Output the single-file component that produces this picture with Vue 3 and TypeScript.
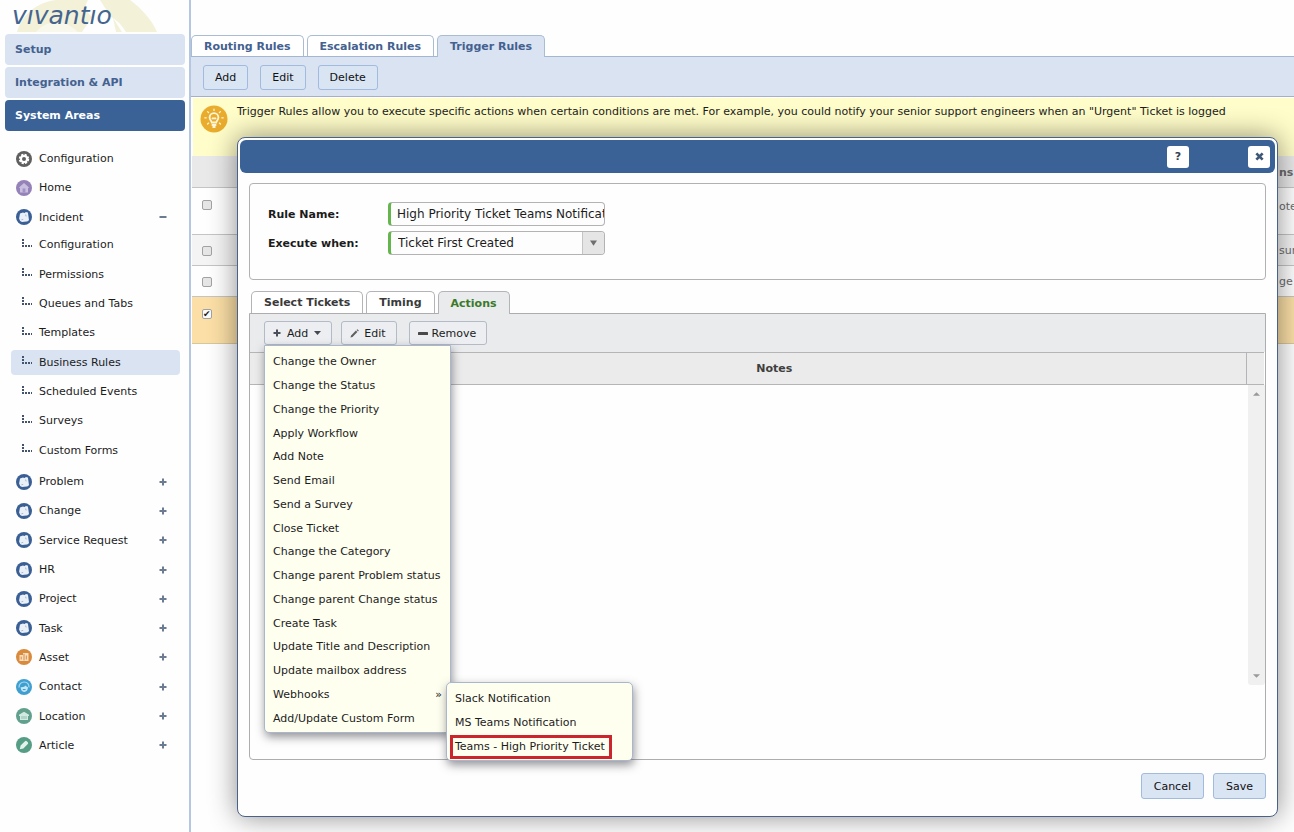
<script setup lang="ts">
import { ref } from 'vue'

interface NavItem {
  label: string
  icon: string
  color: string
  mark?: string
}

const sections = ['Setup', 'Integration & API', 'System Areas']

const topItems: NavItem[] = [
  { label: 'Configuration', icon: 'gear', color: '#5f5f60' },
  { label: 'Home', icon: 'home', color: '#9482b9' },
  { label: 'Incident', icon: 'ticket', color: '#3a5f94', mark: 'minus' },
]

const incidentItems = [
  'Configuration',
  'Permissions',
  'Queues and Tabs',
  'Templates',
  'Business Rules',
  'Scheduled Events',
  'Surveys',
  'Custom Forms',
]

const ticketItem = (label: string): NavItem => ({ label, icon: 'ticket', color: '#3a5f94', mark: 'plus' })

const bottomItems: NavItem[] = [
  ...['Problem', 'Change', 'Service Request', 'HR', 'Project', 'Task'].map(ticketItem),
  { label: 'Asset', icon: 'asset', color: '#d98a3d', mark: 'plus' },
  { label: 'Contact', icon: 'contact', color: '#3f9fd0', mark: 'plus' },
  { label: 'Location', icon: 'location', color: '#62a08e', mark: 'plus' },
  { label: 'Article', icon: 'article', color: '#559d85', mark: 'plus' },
]

const ruleTabs = ['Routing Rules', 'Escalation Rules', 'Trigger Rules']
const ruleButtons = ['Add', 'Edit', 'Delete']

const rules = ref([
  { note: 'ote', checked: false, kind: 'tall' },
  { note: 'sur', checked: false, kind: 'alt' },
  { note: 'ge p', checked: false, kind: '' },
  { note: '', checked: true, kind: 'tall picked' },
])

const dialogTabs = ['Select Tickets', 'Timing', 'Actions']

const menuItems = [
  'Change the Owner',
  'Change the Status',
  'Change the Priority',
  'Apply Workflow',
  'Add Note',
  'Send Email',
  'Send a Survey',
  'Close Ticket',
  'Change the Category',
  'Change parent Problem status',
  'Change parent Change status',
  'Create Task',
  'Update Title and Description',
  'Update mailbox address',
  'Webhooks',
  'Add/Update Custom Form',
]
const webhooks = ['Slack Notification', 'MS Teams Notification', 'Teams - High Priority Ticket']

const ruleName = ref('High Priority Ticket Teams Notification')
const trigger = ref('Ticket First Created')
</script>

<template>
  <div class="app">
    <aside class="sidebar">
      <header class="brand">
        <svg class="brand-art" viewBox="0 0 189 32" aria-hidden="true">
          <path d="M17 32 C22 14 38 2 56 0 L88 0 C84 6 86 12 92 17 L82 32 Z" fill="#f3f1d8" />
          <path d="M36 32 C46 20 64 18 78 32 Z" fill="#f9f8ec" />
          <path d="M100 0 L130 0 C142 9 152 20 157 32 L126 32 C122 25 117 20 111 17 Z" fill="#f3f1d8" />
          <path d="M113 18 L122 32 L116 32 Z" fill="#f3f1d8" />
        </svg>
        <span class="logo">vıvantıo</span>
      </header>
      <nav class="sections">
        <a v-for="(s, i) in sections" :key="s" href="#" :class="{ current: i === 2 }">{{ s }}</a>
      </nav>
      <nav class="tree">
        <template v-for="(group, g) in [topItems, bottomItems]" :key="g">
          <ul :class="g === 0 ? 'top-list' : 'bottom-list'">
            <li v-for="item in group" :key="item.label">
              <a href="#">
                <svg class="disc" viewBox="0 0 16 16" aria-hidden="true">
                  <circle cx="8" cy="8" r="8" :fill="item.color" />
                  <g v-if="item.icon === 'ticket'">
                    <path d="M4 4.4 L7 3.6 Q8.6 4.8 9.8 3 L11.9 3.4 L13 11 Q12.2 12.6 10.6 12.4 L6 13 Q3.6 12.2 3.1 9.4 Z" fill="#e9f0f8" />
                    <path d="M9.6 5.6 L10.1 7.4 M5.4 10.8 L7.2 10.4" stroke="#a3b8d3" stroke-width="1" />
                  </g>
                  <g v-else-if="item.icon === 'gear'">
                    <circle cx="8" cy="8" r="4.2" fill="none" stroke="#ffffff" stroke-width="2" stroke-dasharray="2.2 1.1" />
                    <circle cx="8" cy="8" r="3" fill="none" stroke="#ffffff" stroke-width="2" />
                  </g>
                  <g v-else-if="item.icon === 'home'">
                    <path d="M8 3 L13 7.4 L12 8.3 V12.4 H4 V8.3 L3 7.4 Z" fill="#c9bfdf" />
                    <rect x="6.6" y="8.4" width="2.8" height="4" fill="#a392c6" />
                  </g>
                  <g v-else-if="item.icon === 'asset'">
                    <path d="M3.5 6 H7 V4 H12.5 V12 H3.5 Z" fill="#f8dfc2" />
                    <path d="M8 4.8 V11.5 M5.2 7.6 V10.5 M10.3 6.5 V10.5" stroke="#d98a3d" stroke-width="1" />
                  </g>
                  <g v-else-if="item.icon === 'contact'">
                    <path d="M3 8.5 C2.8 4.8 5.5 3 8.2 3 C11 3 13.2 5 13 8.4" fill="none" stroke="#a9dcf3" stroke-width="1.2" />
                    <path d="M4.6 8.2 Q8 8.6 9.8 6.6 Q10.6 8 12 8.3 Q11.6 12.8 8.2 13 Q5 12.6 4.6 8.2 Z" fill="#c5e8f7" />
                    <path d="M6.8 10.6 H9.6" stroke="#3993c8" stroke-width="1" />
                  </g>
                  <g v-else-if="item.icon === 'location'">
                    <path d="M3 6.7 L8 3.8 L13 6.7 V8 H12 V12 H4 V8 H3 Z" fill="#d3eae1" />
                    <path d="M6 8 V11 M8 8 V11 M10 8 V11" stroke="#7fb5a4" stroke-width="0.8" />
                  </g>
                  <path v-else d="M3.8 12.2 L4.6 8.6 L9 4.2 Q10 3.4 11 4.4 L11.8 5.2 Q12.6 6.2 11.8 7 L7.4 11.4 Z" fill="#e3f2ec" />
                </svg>
                <span class="name">{{ item.label }}</span>
                <svg v-if="item.mark" class="mark" viewBox="0 0 8 8" aria-hidden="true">
                  <path :d="item.mark === 'plus' ? 'M0.5 4 H7.5 M4 0.5 V7.5' : 'M0.5 4 H7.5'" />
                </svg>
              </a>
            </li>
          </ul>
          <ul v-if="g === 0" class="sub-list">
            <li v-for="s in incidentItems" :key="s">
              <a href="#" :class="{ active: s === 'Business Rules' }">
                <svg class="branch" viewBox="0 0 10 8" aria-hidden="true">
                  <path d="M1 0 V2 M1 3 V5 M0 7 H2 M3 7 H5 M6 7 H8 M9 7 H10" />
                </svg>
                <span>{{ s }}</span>
              </a>
            </li>
          </ul>
        </template>
      </nav>
    </aside>

    <main class="content">
      <div class="tabs rule-tabs" role="tablist">
        <button v-for="(t, i) in ruleTabs" :key="t" type="button" role="tab" :aria-selected="i === 2">{{ t }}</button>
      </div>
      <div class="rule-tools">
        <button v-for="b in ruleButtons" :key="b" type="button">{{ b }}</button>
      </div>
      <div class="tip">
        <svg viewBox="0 0 28 28" aria-hidden="true">
          <circle cx="14" cy="14" r="13.5" fill="#eaac2d" />
          <g fill="none" stroke="#fff6dc" stroke-width="1.8" stroke-linecap="round">
            <path d="M11.8 17.5 C11.5 16 9.6 15 9.6 12.6 A4.4 4.4 0 0 1 18.4 12.6 C18.4 15 16.5 16 16.2 17.5 Z" />
            <path d="M12.4 20 H15.6 M13.2 22 H14.8 M12.5 13.4 H15.5" />
            <path d="M14 4.2 V5.4 M7.6 6.6 L8.6 7.6 M20.4 6.6 L19.4 7.6 M4.8 12.8 H6.2 M23.2 12.8 H21.8 M7.6 19 L8.6 18.1 M20.4 19 L19.4 18.1" stroke-width="1.3" />
          </g>
        </svg>
        <p>Trigger Rules allow you to execute specific actions when certain conditions are met. For example, you could notify your senior support engineers when an "Urgent" Ticket is logged</p>
      </div>
      <table class="rules">
        <thead>
          <tr><th></th><th class="note">ns</th></tr>
        </thead>
        <tbody>
          <tr v-for="(r, i) in rules" :key="i" :class="r.kind">
            <td><input v-model="r.checked" type="checkbox" :aria-label="'Select rule ' + (i + 1)" /></td>
            <td class="note">{{ r.note }}</td>
          </tr>
        </tbody>
      </table>
    </main>

    <section class="dialog" role="dialog">
      <header class="title-bar">
        <button type="button" aria-label="Help">?</button>
        <button type="button" aria-label="Close">
          <svg viewBox="0 0 10 10" aria-hidden="true"><path d="M1.5 1.5 L8.5 8.5 M8.5 1.5 L1.5 8.5" /></svg>
        </button>
      </header>
      <div class="dialog-body">
        <form class="fields" @submit.prevent>
          <label for="rule-name">Rule Name:</label>
          <input id="rule-name" v-model="ruleName" type="text" />
          <label for="execute-when">Execute when:</label>
          <div class="drop">
            <select id="execute-when" v-model="trigger">
              <option>Ticket First Created</option>
            </select>
            <span class="drop-arrow" aria-hidden="true">
              <svg viewBox="0 0 8 6"><path d="M0 0 H8 L4 6 Z" /></svg>
            </span>
          </div>
        </form>

        <div class="tabs dialog-tabs" role="tablist">
          <button v-for="(t, i) in dialogTabs" :key="t" type="button" role="tab" :aria-selected="i === 2">{{ t }}</button>
        </div>
        <div class="panel">
          <div class="panel-tools">
            <div class="menu-anchor">
              <button type="button" class="add">
                <svg class="glyph" viewBox="0 0 8 8" aria-hidden="true"><path d="M0.5 4 H7.5 M4 0.5 V7.5" /></svg>
                <span>Add</span>
                <svg class="caret" viewBox="0 0 7 4" aria-hidden="true"><path d="M0 0 H7 L3.5 4 Z" /></svg>
              </button>
              <ul class="menu">
                <li v-for="m in menuItems" :key="m">
                  <button type="button">
                    <span>{{ m }}</span>
                    <span v-if="m === 'Webhooks'">»</span>
                  </button>
                  <ul v-if="m === 'Webhooks'" class="submenu">
                    <li v-for="w in webhooks" :key="w">
                      <button type="button" :class="{ marked: w === webhooks[2] }">{{ w }}</button>
                    </li>
                  </ul>
                </li>
              </ul>
            </div>
            <button type="button" class="edit">
              <svg class="pencil" viewBox="0 0 10 10" aria-hidden="true">
                <path d="M0.5 9.5 L1.2 7.2 L6.6 1.8 L8.2 3.4 L2.8 8.8 Z M7.3 1.1 L8.2 0.2 L9.8 1.8 L8.9 2.7 Z" />
              </svg>
              <span>Edit</span>
            </button>
            <button type="button" class="remove">
              <svg class="dash" viewBox="0 0 10 3" aria-hidden="true"><rect width="10" height="3" rx="0.5" /></svg>
              <span>Remove</span>
            </button>
          </div>
          <table class="actions">
            <thead>
              <tr><th class="lead"></th><th>Notes</th><th class="end"></th></tr>
            </thead>
          </table>
          <div class="list">
            <div class="scroll" aria-hidden="true">
              <svg viewBox="0 0 8 4"><path d="M0 4 L4 0 L8 4 Z" /></svg>
              <svg viewBox="0 0 8 4"><path d="M0 0 H8 L4 4 Z" /></svg>
            </div>
          </div>
        </div>
        <footer class="dialog-footer">
          <button type="button">Cancel</button>
          <button type="button">Save</button>
        </footer>
      </div>
    </section>
  </div>
</template>

<style>
body {
  margin: 0;
  overflow: hidden;
  background: #fefefe;
}
</style>

<style scoped>
.app {
  position: relative;
  display: flex;
  min-height: 100vh;
  font-family: 'DejaVu Sans', Verdana, sans-serif;
  font-size: 11px;
  color: #1c1c1c;
}
.app * {
  box-sizing: border-box;
}
button,
input,
select {
  font: inherit;
  color: inherit;
  margin: 0;
}
ul {
  list-style: none;
  margin: 0;
  padding: 0;
}
a {
  color: inherit;
  text-decoration: none;
}
svg {
  flex: none;
}

/* Sidebar */
.sidebar {
  flex: none;
  width: 189px;
}
.brand {
  position: relative;
  height: 34px;
}
.brand-art {
  position: absolute;
  top: 0;
  left: 0;
  width: 189px;
  height: 32px;
}
.logo {
  position: relative;
  display: block;
  padding-left: 12px;
  font-size: 25px;
  font-style: italic;
  line-height: 32px;
  color: #44658f;
}
.sections {
  display: grid;
  gap: 2px;
  padding: 0 4px 0 5px;
}
.sections a {
  height: 31px;
  padding-left: 10px;
  border-radius: 4px;
  background: #d9e3f2;
  color: #44618f;
  font-weight: bold;
  line-height: 31px;
}
.sections a.current {
  background: #3a6296;
  color: #ffffff;
}
.tree {
  padding: 13px 9px 0 11px;
}
.tree ul {
  display: grid;
  grid-auto-rows: 1fr;
}
.tree li {
  display: flex;
  align-items: center;
}
.tree a {
  display: flex;
  flex: 1;
  align-items: center;
  height: 25px;
  border-radius: 4px;
}
.top-list {
  height: 88px;
}
.tree .sub-list {
  height: 235px;
  margin-top: -2px;
}
.tree .bottom-list {
  height: 293px;
  margin-top: 2px;
}
.disc {
  width: 16px;
  height: 16px;
  margin: 0 7px 0 5px;
}
.name {
  flex: 1;
}
.mark {
  width: 8px;
  height: 8px;
  margin-right: 13px;
  fill: none;
  stroke: #6b7b92;
  stroke-width: 2;
}
.branch {
  width: 10px;
  height: 8px;
  margin: 0 7px 4px 11px;
  fill: none;
  stroke: #43536e;
  stroke-width: 2;
}
.tree a.active {
  background: #d9e3f2;
}

/* Page behind the dialog */
.content {
  display: flex;
  flex: 1;
  flex-direction: column;
  min-width: 0;
  border-left: 2px solid #b4c6e0;
}
.tabs {
  display: flex;
}
.tabs button {
  height: 22px;
  padding: 0 12px;
  border: 1px solid #a9bcd2;
  border-bottom: 0;
  border-radius: 5px 5px 0 0;
  background: #ffffff;
  font-weight: bold;
}
.rule-tabs {
  gap: 3px;
  padding-top: 35px;
  color: #44618f;
}
.rule-tabs button {
  height: 21px;
}
.rule-tabs button[aria-selected='true'] {
  position: relative;
  height: 22px;
  margin-bottom: -1px;
  background: #d9e3f2;
}
.rule-tools {
  display: flex;
  gap: 12px;
  padding: 8px 12px 6px;
  border-top: 1px solid #a3b7d2;
  border-bottom: 1px solid #a9b0bd;
  background: #d9e3f2;
}
.rule-tools button,
.dialog-footer button {
  height: 25px;
  padding: 0 11px;
  border: 1px solid #a1bade;
  border-radius: 3px;
  background: #dae5f4;
  color: #111111;
}
.tip {
  display: flex;
  gap: 9px;
  height: 58px;
  margin: 1px 0 0 2px;
  padding: 7px 0 0 7px;
  background: #fffdc9;
}
.tip svg {
  width: 28px;
  height: 28px;
}
.tip p {
  margin: 0;
  line-height: 14px;
  white-space: nowrap;
}
.rules {
  width: calc(100% - 1px);
  margin-left: 1px;
  border-collapse: collapse;
  table-layout: fixed;
}
.rules th,
.rules td {
  height: 31px;
  padding: 2px 0 0;
  border-bottom: 1px solid #c4c4c6;
  text-align: left;
}
.rules th {
  background: #e9e9ea;
}
.rules .note {
  width: 15px;
  overflow: hidden;
  white-space: nowrap;
  color: #6b6b6d;
}
.rules .tall td {
  height: 47px;
}
.rules .tall td:first-child {
  padding-bottom: 13px;
}
.rules .tall .note {
  padding-bottom: 10px;
}
.rules .alt td {
  background: #f4f4f5;
}
.rules .picked td {
  border-bottom-color: #d8c79c;
  background: #fbdfa6;
}
.rules input {
  display: block;
  appearance: none;
  width: 10px;
  height: 10px;
  margin-left: 10px;
  border: 1px solid #a2a2a2;
  border-radius: 2px;
  background: #e6e6e6;
}
.rules input:checked {
  background: #fbfbfb;
}
.rules input:checked::after {
  content: '✔';
  display: block;
  font-size: 9px;
  line-height: 8px;
}

/* Dialog */
.dialog {
  position: absolute;
  top: 137px;
  left: 237px;
  right: 16px;
  padding: 2px;
  border: 1px solid #4a628a;
  border-radius: 8px;
  background: #fefefe;
  box-shadow: 0 0 28px rgba(0, 0, 0, 0.45);
}
.title-bar {
  display: flex;
  justify-content: flex-end;
  align-items: center;
  gap: 59px;
  height: 33px;
  padding-right: 5px;
  border-radius: 6px;
  background: #3a6296;
}
.title-bar button {
  display: grid;
  place-items: center;
  width: 22px;
  height: 22px;
  padding: 0;
  border: 0;
  border-radius: 3px;
  background: #ffffff;
  color: #333f55;
  font-weight: bold;
}
.title-bar svg {
  width: 9px;
  height: 9px;
  stroke: #3f5878;
  stroke-width: 3;
}
.dialog-body {
  padding: 10px 9px 15px;
}
.fields {
  display: grid;
  grid-template-columns: 120px 217px;
  grid-auto-rows: 24px;
  row-gap: 5px;
  align-items: center;
  height: 97px;
  padding: 18px;
  border: 1px solid #b1b1b1;
  border-radius: 4px;
  font-size: 12px;
}
.fields label {
  font-size: 11px;
  font-weight: bold;
}
.fields input,
.fields select {
  width: 100%;
  height: 24px;
  padding: 0 0 0 6px;
  border: 1px solid #b3b3b3;
  border-left: 3px solid #63b54c;
  border-radius: 4px;
  background: #fdfdfd;
}
.drop {
  position: relative;
}
.fields select {
  appearance: none;
  padding-left: 7px;
}
.drop-arrow {
  position: absolute;
  top: 1px;
  right: 1px;
  bottom: 1px;
  display: grid;
  place-items: center;
  width: 22px;
  border-left: 1px solid #c4c4c4;
  border-radius: 0 3px 3px 0;
  background: #e5e5e5;
  pointer-events: none;
}
.drop-arrow svg {
  width: 7px;
  height: 6px;
  fill: #6f6f6f;
}
.dialog-tabs {
  gap: 3px;
  padding: 11px 0 0 2px;
  color: #3a3a3a;
}
.dialog-tabs button {
  border-color: #b3b3b8;
}
.dialog-tabs button[aria-selected='true'] {
  position: relative;
  height: 23px;
  margin-bottom: -1px;
  background: #e9ebed;
  color: #3a7a28;
}
.panel {
  height: 447px;
  border: 1px solid #adadaf;
  border-radius: 0 0 4px 4px;
}
.panel-tools {
  display: flex;
  height: 38px;
  padding: 7px 14px;
  background: #e9ebed;
}
.panel-tools > button,
.add {
  display: flex;
  align-items: center;
  height: 24px;
  padding: 0 10px 0 8px;
  border: 1px solid #b4bac6;
  border-radius: 3px;
  background: #eceef1;
}
.add {
  gap: 6px;
}
.panel-tools .edit {
  gap: 5px;
  margin-left: 9px;
}
.panel-tools .remove {
  gap: 4px;
  margin-left: 12px;
}
.glyph {
  width: 8px;
  height: 8px;
  stroke: #4b5058;
  stroke-width: 2;
}
.caret {
  width: 7px;
  height: 4px;
  fill: #444850;
}
.pencil {
  width: 9px;
  height: 9px;
  fill: #5f5f5f;
}
.dash {
  width: 10px;
  height: 3px;
  fill: #4a4a4a;
}
.menu-anchor {
  position: relative;
}
.menu,
.submenu {
  position: absolute;
  z-index: 2;
  display: grid;
  grid-auto-rows: 1fr;
  width: 187px;
  border: 1px solid #a9b6cc;
  border-radius: 0 0 5px 5px;
  background: #fffff0;
  box-shadow: 1px 4px 10px rgba(60, 60, 70, 0.55);
}
.menu {
  top: 24px;
  left: 0;
  height: 388px;
  padding: 4px 0 2px;
}
.menu li {
  position: relative;
  display: flex;
}
.menu button {
  display: flex;
  flex: 1;
  align-items: center;
  justify-content: space-between;
  padding: 0 8px;
  border: 0;
  background: none;
  text-align: left;
}
.submenu {
  top: -1px;
  left: 181px;
  height: 79px;
  padding: 4px 3px 1px;
  border-radius: 5px;
}
.submenu button {
  flex: none;
  padding: 0 5px;
}
.submenu .marked {
  padding: 0 4px 0 2px;
  border: 3px solid #cb262e;
}
.actions {
  width: calc(100% - 1px);
  border-collapse: collapse;
  table-layout: fixed;
}
.actions th {
  height: 32px;
  padding: 0;
  border-top: 1px solid #b5b5b7;
  border-bottom: 1px solid #b5b5b7;
  background: #ebebeb;
  color: #3f3f3f;
}
.actions .lead {
  width: 53px;
}
.actions .end {
  width: 18px;
  border-left: 1px solid #b5b5b7;
}
.list {
  display: flex;
  justify-content: flex-end;
  height: 300px;
}
.scroll {
  display: flex;
  flex-direction: column;
  justify-content: space-between;
  align-items: center;
  width: 17px;
  padding: 7px 0;
  border-radius: 0 0 3px 3px;
  background: #f0f0f0;
}
.scroll svg {
  width: 7px;
  height: 4px;
  fill: #999999;
}
.dialog-footer {
  display: flex;
  justify-content: flex-end;
  gap: 9px;
  padding-top: 13px;
}
.dialog-footer button {
  height: 26px;
  padding: 0 12px;
}
</style>
